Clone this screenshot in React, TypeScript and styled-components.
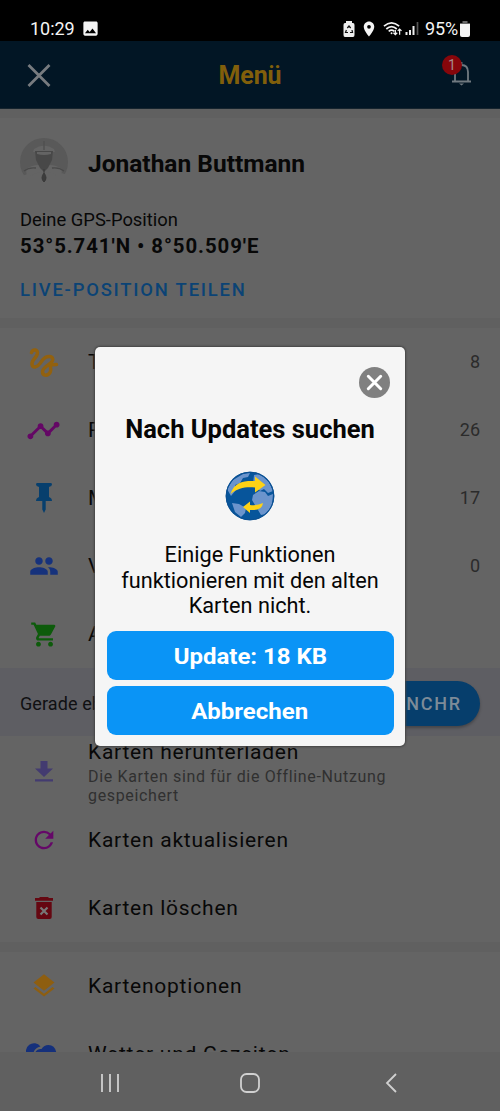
import React from "react";
import styled, { createGlobalStyle } from "styled-components";
import { MdImage, MdLocationOn, MdPeople, MdShoppingCart, MdRefresh, MdLayers, MdTimeline } from "react-icons/md";

const Global = createGlobalStyle`
  *{box-sizing:border-box}
  body{margin:0;background:#646464;font-family:Roboto,"Liberation Sans",sans-serif;color:#080808}
  svg{display:block;flex:none}
`;
const Screen = styled.div`
  position:relative;width:500px;height:1111px;overflow:hidden;display:flex;flex-direction:column;background:#646464;
`;
const StatusBar = styled.div`
  height:41px;flex:none;background:#000;color:#f4f4f4;display:flex;align-items:center;padding:16px 30px 0 30px;font-size:18px;line-height:25px;
`;
const Clock = styled.span`letter-spacing:-.05px;margin-right:6px;`;
const StatusIcons = styled.div`margin-left:auto;display:flex;align-items:center;gap:5px;`;
const Signal = styled.svg`margin-left:-2px;`;
const Battery = styled.span`letter-spacing:-.1px;margin:0 -3px 0 1px;`;
const Header = styled.header`
  height:68px;flex:none;background:#021625;display:grid;grid-template-columns:60px 1fr 60px;align-items:center;padding:0 20px;border-bottom:1px solid #16242e;
`;
const Title = styled.h1`margin:2px 0 0;text-align:center;font-size:25px;font-weight:700;color:#815f0b;letter-spacing:-.1px;`;
const BellBox = styled.div`position:relative;justify-self:end;margin:-3px 7px 0 0;`;
const Badge = styled.span`
  position:absolute;left:-7px;top:-5px;width:20px;height:20px;border-radius:50%;background:#87060b;color:#a58b8c;font-size:14px;line-height:20px;text-align:center;
`;
const Divider = styled.div<{ $h: number }>`height:${p => p.$h}px;flex:none;background:#606060;`;
const Profile = styled.section`height:200px;flex:none;padding:20px 20px 0;`;
const Person = styled.div`display:flex;align-items:center;gap:20px;height:50px;`;
const Name = styled.h2`margin:1px 0 0;font-size:24.5px;font-weight:700;line-height:30px;`;
const GpsLabel = styled.div`margin-top:20px;font-size:18.4px;line-height:24px;`;
const Coordinates = styled.div`font-size:20.4px;line-height:28px;font-weight:700;letter-spacing:.93px;`;
const ShareLink = styled.div`margin-top:18px;font-size:18.4px;line-height:24px;letter-spacing:1.8px;font-weight:500;color:#0b4375;`;
const Row = styled.div<{ $h?: number }>`
  height:${p => p.$h ?? 68}px;flex:none;display:flex;align-items:center;padding:0 20px;
`;
const IconSlot = styled.div<{ $color: string }>`width:48px;margin-right:20px;display:flex;justify-content:center;color:${p => p.$color};`;
const Label = styled.div`font-size:21px;line-height:26px;letter-spacing:.74px;white-space:nowrap;`;
const Hint = styled.div`font-size:16px;line-height:19px;letter-spacing:.65px;color:#303030;width:330px;`;
const Stack = styled.div`display:flex;flex-direction:column;gap:2px;padding-top:2px;`;
const Count = styled.span`margin-left:auto;margin-top:-1px;font-size:18px;color:#2b2b2b;`;
const SyncBar = styled.div`
  height:68px;flex:none;background:#5e5e63;display:flex;align-items:center;justify-content:space-between;padding:2px 20px 0;font-size:18px;letter-spacing:.1px;color:#101012;
`;
const SyncButton = styled.div`
  height:45px;width:150px;border-radius:23px;background:#063e6c;color:#7d8b98;display:flex;align-items:center;justify-content:flex-end;padding-right:18px;font-size:18px;font-weight:500;letter-spacing:1.8px;box-shadow:0 2px 3px #0004;
`;
const Weather = styled.div`height:32px;flex:none;overflow:hidden;`;
const NavBar = styled.nav`
  height:59px;flex:none;padding:2px 0 0 1px;background:#606060;display:grid;grid-template-columns:140px 140px 142px;justify-content:center;align-items:center;justify-items:center;
`;
const ModalLayer = styled.div`position:absolute;inset:0;display:flex;justify-content:center;align-items:flex-start;padding-top:347px;`;
const Dialog = styled.div`
  width:310px;height:399px;border-radius:5px;background:#f5f5f5;padding:20px 12px 12px;display:flex;flex-direction:column;align-items:center;color:#060606;box-shadow:0 0 2px 1px #444;
`;
const CloseButton = styled.div`align-self:flex-end;margin-right:3px;`;
const DialogTitle = styled.h2`margin:14px 0 25px;font-size:25.5px;line-height:34px;font-weight:700;white-space:nowrap;`;
const Message = styled.p`margin:21px 0 12px;font-size:21.7px;line-height:25.5px;text-align:center;height:77px;white-space:nowrap;`;
const Action = styled.div`
  width:287px;height:49px;flex:none;border-radius:9px;background:#0a94f6;color:#fff;font-size:22px;font-weight:700;line-height:51px;text-align:center;
  & + &{margin-top:6px;}
`;
const ActionText = styled.span`display:inline-block;transform:scaleX(1.09);`;

const Globe = () => (
  <svg width="50" height="50" viewBox="0 0 50 50">
    <defs><clipPath id="globe"><circle cx="25" cy="25" r="23.3" /></clipPath></defs>
    <circle cx="25" cy="25" r="24.3" fill="#07559b" />
    <g clipPath="url(#globe)" fill="#6b94cc">
      <path d="M2 18 8 9 18 3l7-1-2 4-5 1-3 5-5 2 1 5-5 6z" />
      <path d="M29 4 35 3l9 8 4 9-5 2-4-4-4 2-3-4-4-3z" />
      <path d="M28 24 34 20l6 1 3 4 5-2-1 12-6 8-5 1-3-5 1-4-4-1-3-5z" />
      <path d="m7 32 7 1 7 4-1 5-4 4-6-5z" />
    </g>
    <circle cx="25" cy="25" r="23.8" fill="none" stroke="#0c4f91" strokeWidth="1" />
    <path d="M5.500 23C9 11 19 9.500 30 10V5.500L40.500 14 30 21.500v-5c-8-1-17 0-24.500 6.500z" fill="#fdd216" />
    <path d="M18 36l7-5.500v3.500q7 1 13-2-1 8-13 7v3z" fill="#fdd216" />
  </svg>
);
const Avatar = () => (
  <svg width="48" height="50" viewBox="0 0 48 50">
    <defs><clipPath id="avatar"><path d="M0 0h48v37L31 32h-14L0 39z" /></clipPath></defs>
    <circle cx="24" cy="24" r="24" fill="#595959" clipPath="url(#avatar)" />
    <path d="M14 11q10-7 20 0l1 3H13zM6 31q9-6 18-3 9-3 18 3l-1 10q-7-7-17-7T7 41z" fill="#646464" />
    <path d="M24 3v9" stroke="#505050" strokeWidth="1.500" />
    <path d="M15 13h18l-1 9-4 8-4 4-4-4-4-8z" fill="#484848" />
    <path d="M17 14h14v2q-7 2-14 0z" fill="#646464" />
    <path d="M4 33q5-4 12-3m16 0q7-1 12 3" stroke="#4a4a4a" strokeWidth="1.300" fill="none" />
    <path d="M24 31v4q4 5 0 9-4-4 0-9" stroke="#393939" fill="#3c3c3c" />
  </svg>
);
const Squiggle = () => (
  <svg width="32" height="32" viewBox="0 0 32 32" fill="none" stroke="currentColor" strokeWidth="3.500" strokeLinecap="round" strokeLinejoin="round">
    <path d="M3.500 6.500C5 2.500 10.500 3.500 9.300 8C8.300 12 3.200 14 4 18.500C4.800 22.500 9 21.500 12 17.500L15 13.500C18.500 9 26 9.500 24.500 14.500C23.300 18.500 15 20.500 14.500 25.500C14.500 30.500 20.500 30 22.300 26C24 22 20.500 19.500 24 18.800L28.500 18.500" />
  </svg>
);
const Pin = () => (
  <svg width="18" height="32" viewBox="0 0 18 32" fill="currentColor">
    <path d="M2 1h14q1 0 1 1.500T14 5v10q3 1 3 4h-6.300v8.500L9 31l-1.700-3.500V19H1q0-3 3-4V5Q1 4 1 2.500T2 1z" />
  </svg>
);
const RouteIcon = styled(MdTimeline)`margin:0 1px 0 -1px;`;
const Download = () => (
  <svg width="18" height="21" viewBox="0 0 18 21" fill="currentColor"><path d="M5.500 0h7v7.500H18l-9 8.500-9-8.500h5.500zM0 18.300h18v2.200H0z" /></svg>
);
const Trash = () => (
  <svg width="18" height="24" viewBox="0 0 18 24">
    <path d="M5 1h8l1 1h4v2.800H0V2h4zM1.300 6h15.400v15q0 2-2 2H3.300q-2 0-2-2z" fill="currentColor" />
    <path d="m5.500 11.500 7 7m0-7-7 7" stroke="#777" strokeWidth="2.200" />
  </svg>
);
const CloudDrawing = styled.svg`margin:0 4px 0 0;`;
const Cloud = () => (
  <CloudDrawing width="32" height="24" viewBox="0 0 32 24" fill="currentColor">
    <path d="M1.500 14A7 7 0 1 1 14.500 4.500Q9 6 7.500 10.500 3.500 11 1.500 14z" />
    <path d="M2 15q2-3 6.500-3 2-5.500 7-5Q18 3 22.500 3q7 0 8 9l-1 12H4q-3-4-2-9z" />
  </CloudDrawing>
);

const lists = [
  { label: "Tracks", count: 8, color: "#92610f", icon: <Squiggle /> },
  { label: "Routen", count: 26, color: "#640765", icon: <RouteIcon size={35} /> },
  { label: "Marker", count: 17, color: "#073f6d", icon: <Pin /> },
  { label: "Vessel", count: 0, color: "#16327c", icon: <MdPeople size={30} /> },
  { label: "Abos", color: "#0d5b0b", icon: <MdShoppingCart size={29} /> },
];

export default function App() {
  return (
    <Screen>
      <Global />
      <StatusBar>
        <Clock>10:29</Clock><MdImage size={19} />
        <StatusIcons>
          <svg width="12" height="16" viewBox="0 0 12 16"><path d="M3 0h6v2h1q1.500 0 1.500 2v10q0 2-1.500 2H2Q.5 16 .5 14V4Q.5 2 2 2h1z" fill="#eee" /><path d="m4.300 7 1.700-2 1.700 2M9 9l.5 2.500H7M5 11.500H2.500L3.400 9" fill="none" stroke="#111" strokeWidth="1.200" /></svg>
          <MdLocationOn size={18} />
          <svg width="19" height="18" viewBox="0 0 20 18" fill="none" stroke="currentColor" strokeWidth="1.800"><path d="M1 6q8-7 16 0M3.500 9q5.500-5 11 0M6 11.500q3-2.500 6 0" /><circle cx="9" cy="13.500" r="1" fill="currentColor" stroke="none" /><path d="M13 10v5m-2-2 2 2 2-2M17.500 15V9m-2 2 2-2 2 2" strokeWidth="1.300" /></svg>
          <Signal width="14" height="15" viewBox="0 0 14 15"><path d="M1.500 11v3M5 9v5M8.500 5v9" stroke="#eee" strokeWidth="2" /><path d="M12.500 1v13" stroke="#555" strokeWidth="1.700" /></Signal>
          <Battery>95%</Battery>
          <svg width="10" height="16" viewBox="0 0 10 16"><path d="M2.500 0h5v2H10v2H0V2h2.500z" fill="#666" /><path d="M0 3h10v11q0 2-2 2H2q-2 0-2-2z" fill="#f4f4f4" /></svg>
        </StatusIcons>
      </StatusBar>
      <Header>
        <svg width="38" height="24" viewBox="0 0 38 24"><path d="m8.500 2 21 21M29.500 2l-21 21" stroke="#777b7f" strokeWidth="2.800" /></svg>
        <Title>Menü</Title>
        <BellBox>
          <svg width="24" height="26" viewBox="0 0 24 26" fill="none" stroke="#707980" strokeWidth="1.800"><path d="M3 21.500h19M6 21V12q0-7 6.500-7T19 12v9M12.500 2v3" /><path d="M10 23.500h5l-2.500 2z" fill="#707980" stroke="none" /></svg>
          <Badge>1</Badge>
        </BellBox>
      </Header>
      <Divider $h={9} />
      <Profile>
        <Person><Avatar /><Name>Jonathan Buttmann</Name></Person>
        <GpsLabel>Deine GPS-Position</GpsLabel>
        <Coordinates>53°5.741'N • 8°50.509'E</Coordinates>
        <ShareLink>LIVE-POSITION TEILEN</ShareLink>
      </Profile>
      <Divider $h={10} />
      {lists.map(item => (
        <Row key={item.label}>
          <IconSlot $color={item.color}>{item.icon}</IconSlot>
          <Label>{item.label}</Label>
          {item.count !== undefined && <Count>{item.count}</Count>}
        </Row>
      ))}
      <SyncBar><span>Gerade eben</span><SyncButton>SYNCHR</SyncButton></SyncBar>
      <Row $h={70}>
        <IconSlot $color="#433b70"><Download /></IconSlot>
        <Stack><Label>Karten herunterladen</Label><Hint>Die Karten sind für die Offline-Nutzung gespeichert</Hint></Stack>
      </Row>
      <Row><IconSlot $color="#650768"><MdRefresh size={28} /></IconSlot><Label>Karten aktualisieren</Label></Row>
      <Row><IconSlot $color="#650711"><Trash /></IconSlot><Label>Karten löschen</Label></Row>
      <Divider $h={10} />
      <Row><IconSlot $color="#8e5e10"><MdLayers size={28} /></IconSlot><Label>Kartenoptionen</Label></Row>
      <Weather><Row><IconSlot $color="#15307b"><Cloud /></IconSlot><Label>Wetter und Gezeiten</Label></Row></Weather>
      <NavBar>
        <svg width="20" height="20" viewBox="0 0 20 20"><path d="M2 1v18M10 1v18M18 1v18" stroke="#d0d0d0" strokeWidth="1.800" /></svg>
        <svg width="22" height="22" viewBox="0 0 22 22"><rect x="2" y="2" width="18" height="18" rx="5.500" fill="none" stroke="#d0d0d0" strokeWidth="1.800" /></svg>
        <svg width="14" height="22" viewBox="0 0 14 22"><path d="M12 2 3 11l9 9" fill="none" stroke="#d0d0d0" strokeWidth="1.800" /></svg>
      </NavBar>
      <ModalLayer>
        <Dialog>
          <CloseButton><svg width="31" height="31" viewBox="0 0 31 31"><circle cx="15.500" cy="15.500" r="15.500" fill="#808080" /><path d="m9.300 9.300 12.400 12.400m0-12.400L9.300 21.700" stroke="#fff" strokeWidth="3" strokeLinecap="round" /></svg></CloseButton>
          <DialogTitle>Nach Updates suchen</DialogTitle>
          <Globe />
          <Message>Einige Funktionen<br />funktionieren mit den alten<br />Karten nicht.</Message>
          <Action><ActionText>Update: 18 KB</ActionText></Action>
          <Action><ActionText>Abbrechen</ActionText></Action>
        </Dialog>
      </ModalLayer>
    </Screen>
  );
}
